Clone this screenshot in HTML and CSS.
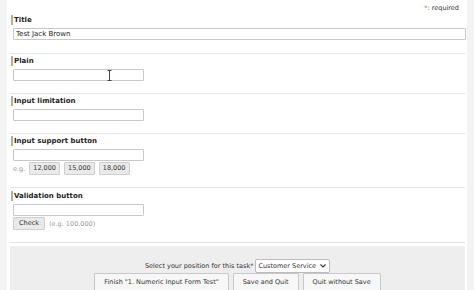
FILE: index.html
```html
<!DOCTYPE html>
<html>
<head>
<meta charset="utf-8">
<link rel="stylesheet" href="styles.css">
</head>
<body>
<div class="page">
  <div class="required"><span class="star">*</span>: required</div>

  <div class="section first">
    <div class="label">Title</div>
    <input class="field wide" type="text" value="Test Jack Brown">
  </div>

  <div class="section">
    <div class="label">Plain</div>
    <div class="cursor-wrap">
      <input class="field" type="text">
      <svg class="ibeam" width="5" height="11" viewBox="0 0 5 11"><path d="M0.5 0.5h4M2.5 0.5v10M0.5 10.5h4" stroke="#444" stroke-width="1" fill="none"/></svg>
    </div>
  </div>

  <div class="section">
    <div class="label">Input limitation</div>
    <input class="field" type="text">
  </div>

  <div class="section">
    <div class="label">Input support button</div>
    <input class="field" type="text">
    <div class="support">
      <span class="eg">e.g.</span>
      <button class="mini">12,000</button>
      <button class="mini">15,000</button>
      <button class="mini">18,000</button>
    </div>
  </div>

  <div class="section last">
    <div class="label">Validation button</div>
    <input class="field" type="text">
    <div class="support">
      <button class="mini check">Check</button>
      <span class="hint">(e.g. 100,000)</span>
    </div>
  </div>

  <div class="footer">
    <div class="position">
      <span>Select your position for this task*</span>
      <span class="select">Customer Service<svg width="6" height="4" viewBox="0 0 6 4"><path d="M0.5 0.5l2.5 2.5l2.5-2.5" stroke="#333" stroke-width="1.1" fill="none"/></svg></span>
    </div>
    <div class="actions">
      <button class="act">Finish "1. Numeric Input Form Test"</button>
      <button class="act">Save and Quit</button>
      <button class="act">Quit without Save</button>
    </div>
  </div>
</div>
</body>
</html>
```

FILE: styles.css
```css
html, body {
  margin: 0;
  padding: 0;
  background: #f3f3f3;
}
body {
  font-family: "DejaVu Sans", Verdana, sans-serif;
  font-size: 6.5px;
  color: #333;
  overflow: hidden;
}
.page {
  margin: 0 7px;
  background: #fff;
  height: 290px;
  padding: 0 2px 0 3px;
  box-sizing: border-box;
}
.required {
  height: 14px;
  line-height: 14px;
  text-align: right;
  padding-right: 6px;
  padding-top: 1px;
  box-sizing: border-box;
}
.star {
  color: #c06000;
}
.section {
  padding: 2px 0 12px 3px;
  border-bottom: 1px solid #e4e4e4;
}
.section.first {
  padding-top: 1px;
  padding-bottom: 13px;
}
.section.last {
  padding-top: 3px;
}
.label {
  font-weight: bold;
  font-size: 7px;
  line-height: 10px;
  height: 10px;
  border-left: 2px solid #b8ad8c;
  padding-left: 1px;
  margin-left: -2px;
  margin-bottom: 3px;
  color: #222;
}
.field {
  display: block;
  box-sizing: border-box;
  width: 131px;
  height: 12px;
  margin: 0;
  padding: 0 2px;
  border: 1px solid #c8c8c8;
  border-radius: 1px;
  font: inherit;
  color: #222;
  background: #fff;
  outline: none;
}
.field.wide {
  width: 453px;
  font-size: 7px;
}
.cursor-wrap {
  position: relative;
}
.ibeam {
  position: absolute;
  left: 94px;
  top: 1px;
}
.support {
  display: flex;
  align-items: center;
  gap: 4px;
  margin-top: 1px;
  height: 13px;
}
.eg, .hint {
  color: #999;
}
.mini {
  font: inherit;
  color: #333;
  height: 13px;
  padding: 0 3px;
  margin: 0;
  background: #eaeaea;
  border: 1px solid #cfcfcf;
  border-radius: 1px;
  line-height: 11px;
}
.check {
  padding: 0 5px;
}
.footer {
  margin: 3px 0 0 0;
  background: #eeeeee;
  height: 46px;
  padding-top: 13px;
  box-sizing: border-box;
  display: flex;
  flex-direction: column;
  align-items: center;
}
.position {
  display: flex;
  align-items: center;
  gap: 2px;
  height: 14px;
}
.select {
  display: inline-flex;
  align-items: center;
  gap: 4px;
  height: 14px;
  box-sizing: border-box;
  padding: 0 3px 0 2px;
  background: #fff;
  border: 1px solid #bbb;
  border-radius: 2px;
}
.actions {
  display: flex;
  gap: 4px;
}
.act {
  font: inherit;
  color: #333;
  height: 18px;
  padding: 0 9px;
  margin: 0;
  background: #f7f7f7;
  border: 1px solid #c8c8c8;
  border-radius: 1px;
}
```
